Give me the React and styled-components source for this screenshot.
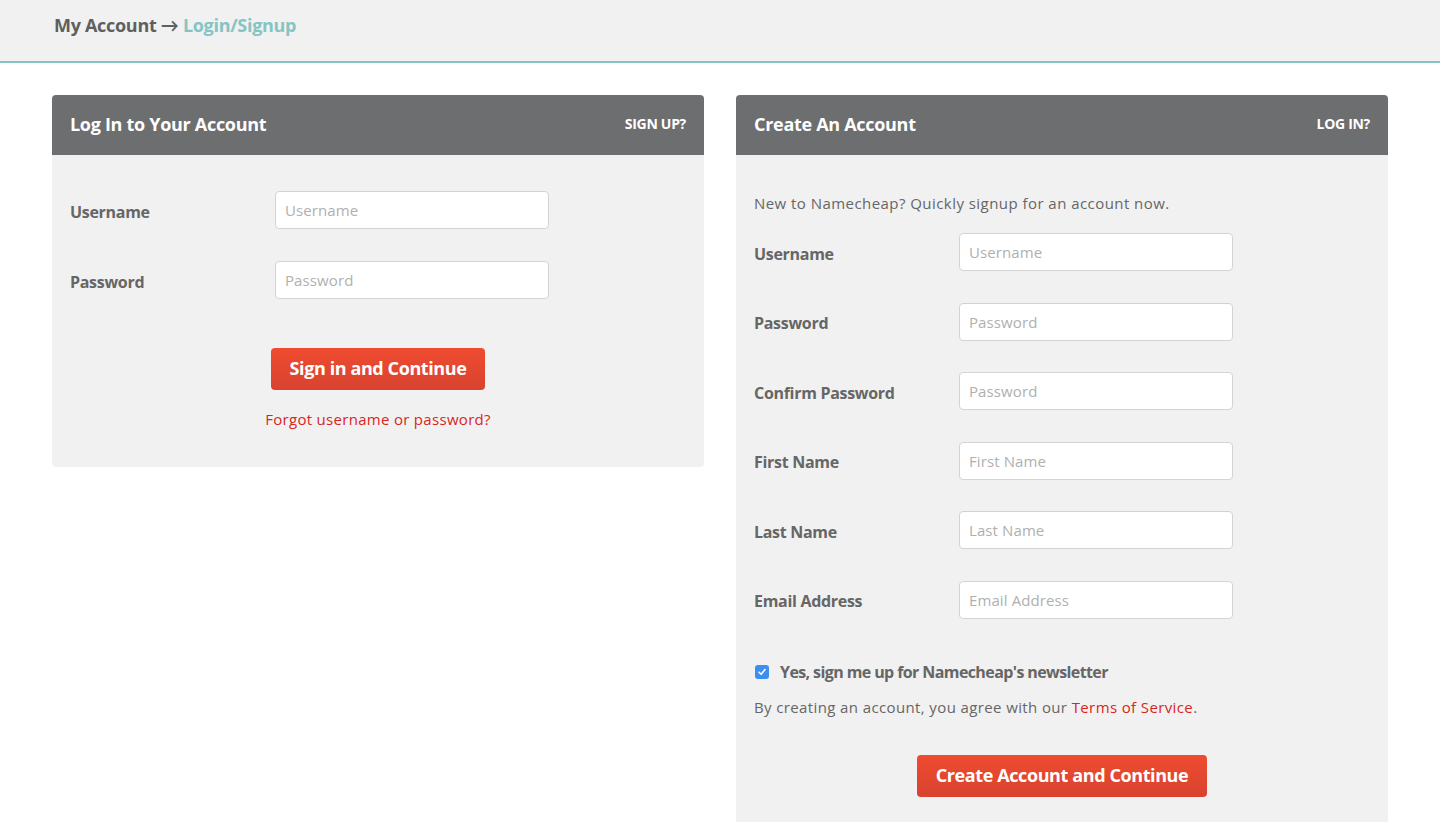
import React from "react";
import styled, { createGlobalStyle } from "styled-components";

const FONT = `"Open Sans", Lato, sans-serif`;

const Global = createGlobalStyle`
  * { box-sizing: border-box; }
  body { margin: 0; background: #fff; font-family: ${FONT}; color: #666; }
`;

const TopBar = styled.header`
  height: 63px;
  background: #f1f1f1;
  border-bottom: 2px solid #86c4c4;
  display: flex;
  align-items: center;
  padding: 0 0 11px 54px;
`;

const Crumb = styled.div`
  font-size: 18px;
  font-weight: 700;
  color: #5f5f5f;
  letter-spacing: -0.3px;
`;

const CrumbLink = styled.span`
  color: #86c4c4;
`;

const Columns = styled.main`
  display: grid;
  grid-template-columns: 652px 652px;
  column-gap: 32px;
  padding: 32px 52px 0;
  align-items: start;
`;

const Panel = styled.section`
  border-radius: 4px;
  overflow: hidden;
  background: #f1f1f1;
`;

const PanelHead = styled.div`
  height: 60px;
  background: #6d6e70;
  display: flex;
  align-items: center;
  justify-content: space-between;
  padding: 0 18px 3px;
  color: #fff;
`;

const PanelTitle = styled.h2`
  margin: 0;
  font-size: 18px;
  font-weight: 700;
  letter-spacing: -0.3px;
`;

const HeadLink = styled.a`
  font-size: 14px;
  font-weight: 700;
  text-transform: uppercase;
  color: #fff;
  letter-spacing: -0.3px;
`;

const PanelBody = styled.div`
  padding: ${(p) => p.$pad};
  display: flex;
  flex-direction: column;
`;

const Intro = styled.p`
  margin: 0 0 20px;
  font-size: 15px;
  line-height: 20px;
  color: #666;
  letter-spacing: 0.45px;
`;

const Fields = styled.div`
  display: flex;
  flex-direction: column;
  gap: ${(p) => p.$gap}px;
`;

const Row = styled.label`
  display: grid;
  grid-template-columns: 205px 274px;
  align-items: center;
`;

const Label = styled.span`
  font-size: 16px;
  font-weight: 700;
  color: #666;
  letter-spacing: -0.3px;
  padding-top: 3px;
`;

const Input = styled.input`
  height: 38px;
  width: 274px;
  border: 1px solid #d3d3d3;
  border-radius: 4px;
  background: #fff;
  padding: 0 9px;
  font-family: ${FONT};
  font-size: 15px;
  color: #444;
  letter-spacing: 0.1px;
  &::placeholder { color: #b0b0b0; }
`;

const Actions = styled.div`
  display: flex;
  flex-direction: column;
  align-items: center;
  margin-top: ${(p) => p.$top}px;
`;

const Button = styled.button`
  height: 42px;
  padding: 0 ${(p) => p.$padX}px 2px;
  border: none;
  border-radius: 4px;
  background: linear-gradient(#ef4b2f, #d8432f);
  color: #fff;
  font-family: ${FONT};
  font-size: 18px;
  font-weight: 700;
  letter-spacing: -0.4px;
`;

const Forgot = styled.a`
  margin-top: 19px;
  font-size: 15px;
  color: #d9261c;
  letter-spacing: 0.3px;
`;

const CheckRow = styled.div`
  display: flex;
  align-items: center;
  gap: 11px;
  margin-top: 42px;
  padding-left: 1px;
`;

const Box = styled.span`
  width: 14px;
  height: 14px;
  border-radius: 3px;
  background: #3b8ff0;
  display: flex;
  align-items: center;
  justify-content: center;
`;

const CheckText = styled.span`
  font-size: 16px;
  font-weight: 700;
  color: #666;
  letter-spacing: -0.6px;
`;

const Terms = styled.p`
  margin: 14px 0 0;
  font-size: 15px;
  line-height: 20px;
  color: #666;
  letter-spacing: 0.38px;
`;

const TermsLink = styled.a`
  color: #d9261c;
`;

export default function App() {
  const signup = [
    ["Username", "Username"],
    ["Password", "Password"],
    ["Confirm Password", "Password"],
    ["First Name", "First Name"],
    ["Last Name", "Last Name"],
    ["Email Address", "Email Address"],
  ];
  return (
    <>
      <Global />
      <TopBar>
        <Crumb>
          My Account → <CrumbLink>Login/Signup</CrumbLink>
        </Crumb>
      </TopBar>
      <Columns>
        <Panel>
          <PanelHead>
            <PanelTitle>Log In to Your Account</PanelTitle>
            <HeadLink>Sign up?</HeadLink>
          </PanelHead>
          <PanelBody $pad="36px 18px 38px">
            <Fields $gap={32}>
              <Row>
                <Label>Username</Label>
                <Input placeholder="Username" />
              </Row>
              <Row>
                <Label>Password</Label>
                <Input type="password" placeholder="Password" />
              </Row>
            </Fields>
            <Actions $top={49}>
              <Button $padX={19}>Sign in and Continue</Button>
              <Forgot>Forgot username or password?</Forgot>
            </Actions>
          </PanelBody>
        </Panel>
        <Panel>
          <PanelHead>
            <PanelTitle>Create An Account</PanelTitle>
            <HeadLink>Log in?</HeadLink>
          </PanelHead>
          <PanelBody $pad="38px 18px 40px">
            <Intro>New to Namecheap? Quickly signup for an account now.</Intro>
            <Fields $gap={31.6}>
              {signup.map(([l, p]) => (
                <Row key={l}>
                  <Label>{l}</Label>
                  <Input type={p === "Password" ? "password" : "text"} placeholder={p} />
                </Row>
              ))}
            </Fields>
            <CheckRow>
              <Box>
                <svg width="10" height="10" viewBox="0 0 10 10">
                  <path d="M2 5.2 L4.1 7.3 L8 2.6" fill="none" stroke="#fff" strokeWidth="1.6" strokeLinecap="round" strokeLinejoin="round" />
                </svg>
              </Box>
              <CheckText>Yes, sign me up for Namecheap's newsletter</CheckText>
            </CheckRow>
            <Terms>
              By creating an account, you agree with our <TermsLink>Terms of Service</TermsLink>.
            </Terms>
            <Actions $top={38}>
              <Button $padX={19}>Create Account and Continue</Button>
            </Actions>
          </PanelBody>
        </Panel>
      </Columns>
    </>
  );
}
